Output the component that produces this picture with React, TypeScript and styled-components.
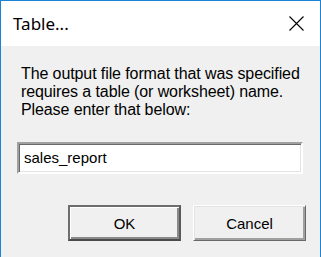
import React from "react";
import styled, { createGlobalStyle } from "styled-components";

const GlobalStyle = createGlobalStyle`
  html, body {
    margin: 0;
    padding: 0;
    background: #f0f0f0;
    overflow: hidden;
  }
`;

const Window = styled.div`
  width: 321px;
  height: 257px;
  box-sizing: border-box;
  border: 1px solid #1883d7;
  border-bottom: none;
  background: #f0f0f0;
  display: flex;
  flex-direction: column;
`;

const TitleBar = styled.div`
  height: 45px;
  background: #ffffff;
  display: flex;
  align-items: center;
  justify-content: space-between;
  padding-left: 12px;
  padding-right: 16px;
`;

const Title = styled.span`
  font-family: "Noto Sans", "Open Sans", sans-serif;
  font-size: 17px;
  color: #000;
`;

const CloseButton = styled.div`
  width: 15px;
  height: 15px;
  display: flex;
  margin-top: -1px;
`;

const Body = styled.div`
  flex: 1;
  display: flex;
  flex-direction: column;
  padding: 19px 17px 0 16px;
  font-family: "Liberation Sans", Arial, sans-serif;
  color: #000;
`;

const Message = styled.p`
  margin: 0 0 0 4px;
  font-size: 16px;
  line-height: 18px;
  letter-spacing: -0.1px;
  white-space: nowrap;
`;

const NameInput = styled.input`
  margin-top: 23px;
  height: 32px;
  box-sizing: border-box;
  width: 286px;
  border: 2px solid;
  border-color: #a0a0a0 #ffffff #ffffff #a0a0a0;
  box-shadow: inset 1px 1px 0 #696969, inset -1px -1px 0 #e3e3e3;
  background: #fff;
  padding: 0 0 2px 5px;
  font-family: "Liberation Sans", Arial, sans-serif;
  font-size: 15px;
  color: #000;
  outline: none;
`;

const ButtonRow = styled.div`
  margin-top: 31px;
  margin-right: -3px;
  display: flex;
  justify-content: flex-end;
  gap: 12px;
`;

const Button = styled.button<{ $default?: boolean }>`
  width: 113px;
  height: 36px;
  box-sizing: border-box;
  background: #f0f0f0;
  font-family: "Liberation Sans", Arial, sans-serif;
  font-size: 15px;
  color: #000;
  padding: 0;
  border: ${(p) => (p.$default ? "2px solid #5a5a5a" : "1px solid")};
  border-color: ${(p) =>
    p.$default ? "#6e6e6e #5a5a5a #4a4a4a #6e6e6e" : "#ffffff #696969 #696969 #ffffff"};
  box-shadow: ${(p) =>
    p.$default
      ? "inset 1px 1px 0 #ffffff, inset -2px -2px 0 #8a8a8a"
      : "inset 1px 1px 0 #e3e3e3, inset -2px -2px 0 #a0a0a0"};
`;

export default function App() {
  return (
    <>
      <GlobalStyle />
      <Window>
        <TitleBar>
          <Title>Table...</Title>
          <CloseButton>
            <svg width="15" height="15" viewBox="0 0 15 15">
              <path d="M0.5 0.5 L14.5 14.5 M14.5 0.5 L0.5 14.5" stroke="#000" strokeWidth="1.1" fill="none" />
            </svg>
          </CloseButton>
        </TitleBar>
        <Body>
          <Message>
            The output file format that was specified
            <br />
            requires a table (or worksheet) name.
            <br />
            Please enter that below:
          </Message>
          <NameInput defaultValue="sales_report" />
          <ButtonRow>
            <Button $default>OK</Button>
            <Button>Cancel</Button>
          </ButtonRow>
        </Body>
      </Window>
    </>
  );
}
